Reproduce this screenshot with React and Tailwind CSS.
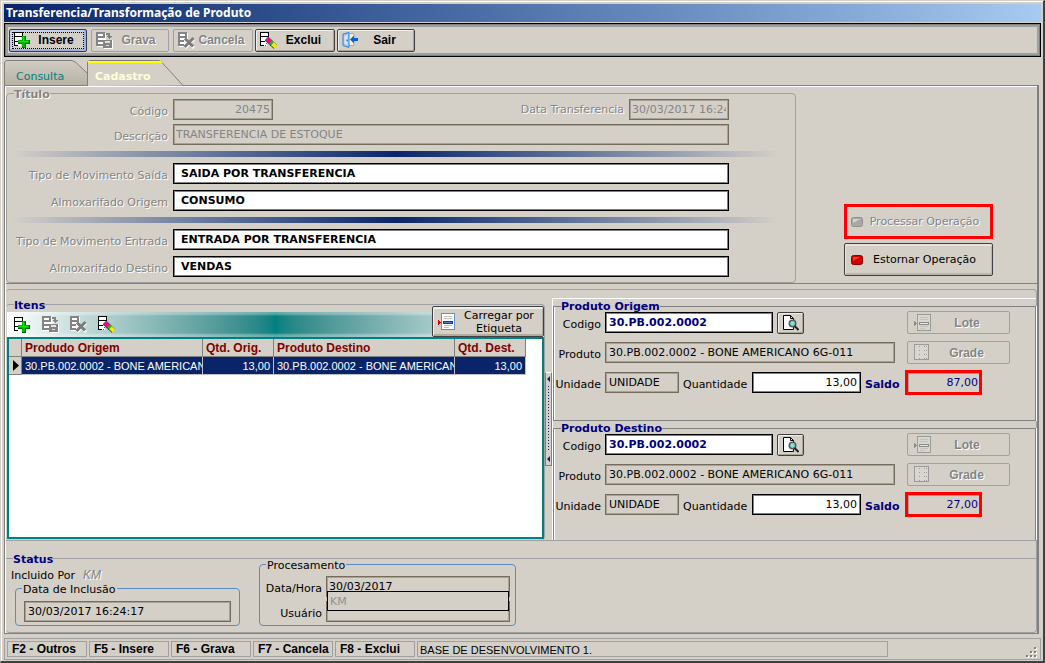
import React from "react";

const DISABLED_TEXT = "text-[#848484] [text-shadow:1px_1px_0_#fff]";

/* ---------- icons ---------- */

function GridRows() {
  return (
    <>
      <path d="M1 1h7v3H1z M1 5h7v4H1z M1 10h6v4H1z" fill="#fff" />
      <path d="M0 0h9v1H0z M0 4h9v1H0z M0 9h5v1H0z M0 0h1v14H0z M8 0h1v6H8z M1 13h3v1H1z" fill="#000" />
    </>
  );
}

function InsertIcon() {
  return (
    <svg width="16" height="16" viewBox="0 0 16 16" shapeRendering="crispEdges" aria-hidden="true">
      <GridRows />
      <path d="M8 4h4v4h4v4h-4v4H8v-4H4V8h4z" fill="#006400" />
      <path d="M8 4h3v4h4v3h-4v4H8v-4H4V8h4z" fill="#00b400" />
      <path d="M9 5h1v4h4v1H5V9h4z" fill="#00f000" />
    </svg>
  );
}

function SaveIcon() {
  return (
    <svg width="17" height="17" viewBox="0 0 17 17" shapeRendering="crispEdges" aria-hidden="true">
      <path d="M1 1h9v14H1z M8 8h9v9H8z" fill="#fff" />
      <path d="M0 0h9v2H0z M0 4h9v2H0z M0 8h7v2H0z M0 12h7v2H0z M0 0h2v14H0z M7 0h2v6H7z" fill="#848484" />
      <path d="M10 1h4v3h2l-3 3-3-3h2V3h-2z" fill="#848484" />
      <path d="M7 8h9v8H7z" fill="#848484" />
      <path d="M9 9h5v2H9z M10 13h3v1h-3z" fill="#e4e0da" />
    </svg>
  );
}

function CancelIcon() {
  return (
    <svg width="17" height="17" viewBox="0 0 17 17" aria-hidden="true">
      <g shapeRendering="crispEdges">
        <path d="M1 1h9v14H1z" fill="#fff" />
        <path d="M0 0h9v2H0z M0 4h9v2H0z M0 8h6v2H0z M0 12h6v2H0z M0 0h2v14H0z M7 0h2v6H7z" fill="#848484" />
      </g>
      <path d="M8 8l8 8M16 7l-9 9" stroke="#fff" strokeWidth="3" />
      <path d="M7 6.5l8 8M15.500 6l-9 9" stroke="#7c7c7c" strokeWidth="3" />
    </svg>
  );
}

function DeleteIcon() {
  return (
    <svg width="17" height="17" viewBox="0 0 17 17" aria-hidden="true">
      <g shapeRendering="crispEdges">
        <GridRows />
        <path d="M6 11h1v1H6z M5 13h1v1H5z M10 13h1v1h-1z" fill="#555" />
      </g>
      <path d="M6.500 6.500l9 8.500" stroke="#333" strokeWidth="5" />
      <path d="M7 6.500l3.500 3.500" stroke="#ff00a0" strokeWidth="4" />
      <path d="M9.800 9l1.500 1.500" stroke="#f02020" strokeWidth="4" />
      <path d="M10.800 10l2 2" stroke="#00c838" strokeWidth="4" />
      <path d="M12.500 11.700l3.500 3.300" stroke="#f4ec00" strokeWidth="4" />
    </svg>
  );
}

function ExitIcon() {
  return (
    <svg width="17" height="16" viewBox="0 0 17 16" aria-hidden="true">
      <path d="M3 1.500h9v12H3z" fill="#f8f0c8" stroke="#7db4f0" />
      <path d="M1 2l6-1.500v15L1 13.500z" fill="#9cc8f8" stroke="#3a7fd8" />
      <path d="M2.500 4l3-0.800v9.600l-3-0.800z" fill="#d8ecff" />
      <path d="M4.500 7.500h1.200v1.800H4.500z" fill="#1c50a8" />
      <path d="M8 7.500l4-4v2.500h4v3h-4v2.500z" fill="#0a5ce0" />
    </svg>
  );
}

function LabelIcon({ muted }) {
  const edge = muted ? "#9a9a9a" : "#5a94c8";
  const bar = muted ? "#8c8c8c" : "#0c3c8c";
  const page = muted ? "#d9d6cf" : "#fff";
  return (
    <svg width="17" height="17" viewBox="0 0 17 17" shapeRendering="crispEdges" aria-hidden="true">
      <path d="M3.500 0.500h13v16h-13z" fill={page} stroke={edge} />
      <path d="M6 3.500h8M6 5.500h8M6 12.500h8M6 14.500h5" stroke={muted ? "#c4c0ba" : "#c0c0c0"} />
      <path d="M5 8h10v3H5z" fill={bar} />
      <path d="M6 9h8v1H6z" fill={muted ? "#e8e5df" : "#4c88d8"} />
      <path d="M0 7l3 2.500L0 12z" fill={muted ? "#8c8c8c" : "#e00000"} />
    </svg>
  );
}

function GradeIcon() {
  return (
    <svg width="16" height="17" viewBox="0 0 16 17" shapeRendering="crispEdges" aria-hidden="true">
      <path d="M0.500 0.500h14v15h-14z" fill="#d9d6cf" stroke="#9a9a9a" />
      <path d="M5.500 2v13M10.500 2v13M12.500 2v13" stroke="#9c9c9c" strokeDasharray="1 3" />
    </svg>
  );
}

function SearchIcon() {
  return (
    <svg width="17" height="17" viewBox="0 0 17 17" aria-hidden="true">
      <path d="M1.500 1.500h7l3 3v11h-10z" fill="#fff" stroke="#000" />
      <path d="M8.500 1.500v3h3" fill="none" stroke="#000" />
      <circle cx="10.500" cy="9.500" r="3.200" fill="#7fe0e0" stroke="#5a5a5a" strokeWidth="1.600" />
      <path d="M12.500 12l4 4" stroke="#222" strokeWidth="2" />
    </svg>
  );
}

function Lamp({ muted }) {
  return (
    <svg width="12" height="10" viewBox="0 0 12 10" aria-hidden="true">
      <rect x="0.500" y="0.500" width="11" height="9" rx="2" fill={muted ? "#a8a8a8" : "#d40000"} stroke={muted ? "#909090" : "#8c0000"} />
      <path d="M2 6V2h7z" fill={muted ? "#d4d4d4" : "#f83830"} />
    </svg>
  );
}

/* ---------- controls ---------- */

function ToolButton({ icon, children, disabled, active, width }) {
  const look = disabled
    ? `border-[#a0a0a0] ${DISABLED_TEXT}`
    : active
      ? "border-[#303848] text-black shadow-[inset_-2px_-2px_0_#9db4e4,inset_1px_1px_0_#c4d0f0] outline-1 outline-dotted outline-black -outline-offset-4"
      : "border-[#404040] text-black shadow-[inset_1px_1px_0_#f0eeea,inset_-1px_-1px_0_#a8a498]";
  return (
    <button
      type="button"
      disabled={disabled}
      className={`flex h-[23px] items-center rounded-xs border pr-1 pl-1 font-['Liberation_Sans',sans-serif] text-xs font-bold ${width} ${look}`}
    >
      {icon}
      <span className="flex-1 text-center">{children}</span>
    </button>
  );
}

const FIELD_LOOKS = {
  locked: "border-[#746c5c] bg-[#d4d0c8] shadow-[inset_0_0_0_1px_#a8a294]",
  open: "border-black bg-white shadow-[inset_0_0_0_1px_#808080]",
};

function Field({ id, value, look = "locked", pad = "px-[3px]", className = "" }) {
  return (
    <input
      id={id}
      readOnly
      defaultValue={value}
      className={`h-[21px] min-w-0 border outline-none ${pad} ${FIELD_LOOKS[look]} ${className}`}
    />
  );
}

function FormRow({ id, label, value, look, pad, className, children }) {
  return (
    <div className="flex h-[21px] items-center gap-[5px]">
      <label htmlFor={id} className={`w-40 shrink-0 pt-1 text-right whitespace-nowrap ${DISABLED_TEXT}`}>
        {label}
      </label>
      <Field id={id} value={value} look={look} pad={pad} className={className} />
      {children}
    </div>
  );
}

function Divider() {
  return <div className="mr-4 ml-1 h-1.5 bg-linear-to-r from-[#d4d0c8] via-[#0a246a] to-[#d4d0c8]" />;
}

function Tab({ label, active }) {
  return (
    <button
      type="button"
      role="tab"
      aria-selected={active}
      className={`relative h-[26px] text-left ${active ? "w-24 pl-2 font-bold text-[#ffffd8]" : "w-[83px] pl-3 text-[#008080]"}`}
    >
      {active ? (
        <svg className="absolute inset-0" width="97" height="26" viewBox="0 0 97 26" aria-hidden="true">
          <path d="M0.500 26V2l2-1.500H72l3 2L96 25.500" fill="#d4d0c8" stroke="#808080" />
          <path d="M1 1h72l2 2H1z" fill="#ffff00" shapeRendering="crispEdges" />
        </svg>
      ) : (
        <svg className="absolute inset-0" width="84" height="26" viewBox="0 0 84 26" aria-hidden="true">
          <defs>
            <linearGradient id="tabShade" x1="0" y1="0" x2="0" y2="1">
              <stop offset="0" stopColor="#d0ccc2" />
              <stop offset="1" stopColor="#b8b2a4" />
            </linearGradient>
          </defs>
          <path d="M0.500 26V2l2-1.500H68l4 2L83.500 13.500V25.500H0" fill="url(#tabShade)" stroke="#808080" />
        </svg>
      )}
      <span className="relative inline-block pt-2">{label}</span>
    </button>
  );
}

function SideButton({ icon, children }) {
  return (
    <button
      type="button"
      disabled
      className={`flex h-[23px] w-[103px] shrink-0 items-center rounded-xs border border-[#a0a0a0] px-1.5 font-['Liberation_Sans',sans-serif] text-xs font-bold ${DISABLED_TEXT}`}
    >
      {icon}
      <span className="flex-1 text-center">{children}</span>
    </button>
  );
}

function ProductBox({ title, prefix, balance, className }) {
  const label = "w-[47px] shrink-0 pt-1 text-right whitespace-nowrap";
  return (
    <fieldset className={`min-w-0 border border-[#808080] shadow-[inset_1px_0_0_#fff,1px_0_0_#fff] ${className}`}>
      <legend className="ml-[7px] h-3 leading-[14px] font-bold text-[#000080]">{title}</legend>
      <div className="flex flex-col gap-[9px] pr-[25px]">
        <div className="flex h-[21px] items-center gap-1">
          <label htmlFor={`${prefix}-code`} className={label}>Codigo</label>
          <Field id={`${prefix}-code`} value="30.PB.002.0002" look="open" className="w-[168px] font-bold text-[#000080]" />
          <button
            type="button"
            aria-label="Pesquisar"
            className="mr-auto flex h-[22px] w-[27px] items-center justify-center rounded-xs border border-[#404040] shadow-[inset_1px_1px_0_#f0eeea,inset_-1px_-1px_0_#a8a498]"
          >
            <SearchIcon />
          </button>
          <SideButton icon={<LabelIcon muted />}>Lote</SideButton>
        </div>
        <div className="flex h-[21px] items-center gap-1">
          <label htmlFor={`${prefix}-product`} className={label}>Produto</label>
          <Field id={`${prefix}-product`} value="30.PB.002.0002 - BONE AMERICANO 6G-011" className="mr-2 flex-1" />
          <SideButton icon={<GradeIcon />}>Grade</SideButton>
        </div>
        <div className="flex h-[21px] items-center gap-1">
          <label htmlFor={`${prefix}-unit`} className={label}>Unidade</label>
          <Field id={`${prefix}-unit`} value="UNIDADE" className="w-[74px]" />
          <label htmlFor={`${prefix}-qty`} className="w-[65px] shrink-0 pt-1 whitespace-nowrap">Quantidade</label>
          <Field id={`${prefix}-qty`} value="13,00" look="open" className="w-[109px] text-right" />
          <label htmlFor={`${prefix}-balance`} className="w-9 shrink-0 pt-1 font-bold whitespace-nowrap text-[#000080]">Saldo</label>
          <input
            id={`${prefix}-balance`}
            readOnly
            defaultValue={balance}
            className="h-[25px] w-[77px] border-[3px] border-[#ff0000] bg-[#d4d0c8] px-px text-right text-[#000080] shadow-[inset_1px_1px_0_#a0a0a0] outline-none"
          />
        </div>
      </div>
    </fieldset>
  );
}

function ItemsTable() {
  const head = "h-[18px] overflow-hidden border-r border-b border-[#808080] bg-[#d4d0c8] px-[3px] text-left text-xs leading-4 font-bold whitespace-nowrap text-[#800000]";
  const cell = "h-[18px] border-r border-b border-[#c0c0c0] bg-[#0a246a] pl-[3px] text-[11px] leading-4 whitespace-nowrap text-white";
  return (
    <table className="w-[517px] table-fixed border-separate border-spacing-0 font-['Liberation_Sans',sans-serif]">
      <colgroup>
        <col className="w-[13px]" />
        <col className="w-[181px]" />
        <col className="w-[71px]" />
        <col className="w-[181px]" />
        <col className="w-[71px]" />
      </colgroup>
      <thead>
        <tr>
          <th className={head} />
          <th className={head}>Produdo Origem</th>
          <th className={head}>Qtd. Orig.</th>
          <th className={head}>Produto Destino</th>
          <th className={head}>Qtd. Dest.</th>
        </tr>
      </thead>
      <tbody>
        <tr>
          <td className="border-r border-b border-[#808080] bg-[#d4d0c8] pl-1">
            <svg width="6" height="11" viewBox="0 0 6 11" aria-hidden="true">
              <path d="M0 0l6 5.500L0 11z" />
            </svg>
          </td>
          <td className={cell}>
            <div className="overflow-hidden">30.PB.002.0002 - BONE AMERICANO</div>
          </td>
          <td className={`${cell} pr-[3px] text-right`}>13,00</td>
          <td className={cell}>
            <div className="overflow-hidden">30.PB.002.0002 - BONE AMERICANO</div>
          </td>
          <td className={`${cell} pr-[3px] text-right`}>13,00</td>
        </tr>
      </tbody>
    </table>
  );
}

function IconButton({ label, disabled, children }) {
  return (
    <button type="button" aria-label={label} disabled={disabled} className="flex w-7 items-center">
      {children}
    </button>
  );
}

const KEYS = ["F2 - Outros", "F5 - Insere", "F6 - Grava", "F7 - Cancela", "F8 - Exclui"];

export default function App() {
  return (
    <div className="flex min-h-screen flex-col border-t border-r-2 border-b-2 border-l border-t-[#d4d0c8] border-r-[#404040] border-b-[#404040] border-l-[#d4d0c8] bg-[#d4d0c8] pt-[3px] pr-0.5 pb-px pl-[3px] font-['DejaVu_Sans',sans-serif] text-[11px] leading-[14px] text-black shadow-[inset_1px_1px_0_#fff]">
      <header className="h-[19px] bg-linear-to-r from-[#0a246a] to-[#a6caf0] bg-clip-content pb-px">
        <h1 className="px-0.5 font-['Noto_Sans',sans-serif] text-xs leading-[18px] font-bold text-white">Transferencia/Transformação de Produto</h1>
      </header>

      <div className="flex h-[34px] shrink-0 items-center gap-1 border border-black px-1 shadow-[inset_0_0_0_1px_#808080,inset_0_0_0_3px_#a0a0a0]">
        <ToolButton icon={<InsertIcon />} active width="w-[78px]">Insere</ToolButton>
        <ToolButton icon={<SaveIcon />} disabled width="w-[78px]">Grava</ToolButton>
        <div className="flex gap-0.5">
          <ToolButton icon={<CancelIcon />} disabled width="w-[80px]">Cancela</ToolButton>
          <ToolButton icon={<DeleteIcon />} width="w-[80px]">Exclui</ToolButton>
          <ToolButton icon={<ExitIcon />} width="w-[78px]">Sair</ToolButton>
        </div>
      </div>

      <div role="tablist" className="mt-[3px] -mb-px flex h-[26px] shrink-0">
        <Tab label="Consulta" />
        <Tab label="Cadastro" active />
      </div>

      <main className="mr-0.5 flex flex-1 flex-col border border-r-2 border-[#808080] pl-px shadow-[inset_1px_1px_0_#fff]">
        <section className="flex border-b border-[#808080]">
          <fieldset className="mt-px min-w-0 flex-1 rounded-sm border border-[#a0a0a0]">
            <legend className={`ml-[7px] h-3 leading-[15px] font-bold ${DISABLED_TEXT}`}>Título</legend>
            <div className="flex flex-col gap-1.5 pb-[5px] pl-px">
              <div className="flex flex-col gap-1 pr-[66px]">
                <FormRow id="codigo" label="Código" value="20475" pad="px-0.5" className="w-[100px] text-right text-[#848484]">
                  <label htmlFor="data" className={`ml-auto whitespace-nowrap ${DISABLED_TEXT}`}>Data Transferencia</label>
                  <Field id="data" value="30/03/2017 16:24:17" pad="px-0.5" className="w-[100px] text-[#848484]" />
                </FormRow>
                <FormRow id="descricao" label="Descrição" value="TRANSFERENCIA DE ESTOQUE" pad="px-0.5" className="flex-1 text-[#848484]" />
              </div>
              <Divider />
              <div className="flex flex-col gap-1.5 pr-[66px]">
                <FormRow id="mov-saida" label="Tipo de Movimento Saída" value="SAIDA POR TRANSFERENCIA" look="open" pad="px-[7px]" className="flex-1 font-bold" />
                <FormRow id="origem" label="Almoxarifado Origem" value="CONSUMO" look="open" pad="px-[7px]" className="flex-1 font-bold" />
              </div>
              <Divider />
              <div className="flex flex-col gap-1.5 pr-[66px]">
                <FormRow id="mov-entrada" label="Tipo de Movimento Entrada" value="ENTRADA POR TRANSFERENCIA" look="open" pad="px-[7px]" className="flex-1 font-bold" />
                <FormRow id="destino" label="Almoxarifado Destino" value="VENDAS" look="open" pad="px-[7px]" className="flex-1 font-bold" />
              </div>
            </div>
          </fieldset>
          <div className="flex w-[241px] shrink-0 flex-col justify-end gap-1 pr-11 pb-[7px] pl-12">
            <button
              type="button"
              disabled
              className={`flex h-[35px] items-center border-[3px] border-[#ff0000] px-1 whitespace-nowrap ${DISABLED_TEXT}`}
            >
              <Lamp muted />
              <span className="flex-1 text-center">Processar Operação</span>
            </button>
            <button
              type="button"
              className="flex h-[33px] items-center rounded-xs border border-[#404040] px-1.5 whitespace-nowrap shadow-[inset_1px_2px_0_#e6e3dd,inset_-1px_-2px_0_#bab6aa]"
            >
              <Lamp />
              <span className="flex-1 text-center">Estornar Operação</span>
            </button>
          </div>
        </section>

        <section className="mt-[5px] flex flex-1 flex-col rounded-sm border border-l-0 border-[#a0a0a0]">
          <div className="mt-2 flex flex-1 border-b border-[#a0a0a0]">
            <fieldset className="flex min-w-0 flex-1 flex-col rounded-sm border-t border-r border-[#a0a0a0] pb-px pl-px">
              <legend className="ml-[7px] h-3 leading-[15px] font-bold text-[#000080]">Itens</legend>
              <div className="mt-0.5 flex h-[25px] shrink-0 items-end bg-linear-to-r from-white via-[#008080] to-white pl-[7px] shadow-[inset_0_3px_2px_rgba(255,255,255,0.35),inset_0_-3px_2px_rgba(255,255,255,0.35)]">
                <div className="flex flex-1 self-center">
                  <IconButton label="Inserir item"><InsertIcon /></IconButton>
                  <IconButton label="Gravar item" disabled><SaveIcon /></IconButton>
                  <IconButton label="Cancelar item" disabled><CancelIcon /></IconButton>
                  <IconButton label="Excluir item"><DeleteIcon /></IconButton>
                </div>
                <button
                  type="button"
                  className="relative flex h-[31px] w-[112px] items-center rounded-xs border border-[#404040] bg-[#d4d0c8] pl-[5px] leading-[13px] shadow-[inset_1px_2px_0_#f0eeea,inset_-1px_-2px_0_#b0ac9f]"
                >
                  <LabelIcon />
                  <span className="flex-1 text-center">Carregar por Etiqueta</span>
                </button>
              </div>
              <div className="flex-1 border-2 border-[#008080] bg-white">
                <ItemsTable />
              </div>
            </fieldset>

            <div className="flex w-[7px] shrink-0 flex-col items-center justify-between self-center border border-[#808080] border-t-white py-px">
              <svg width="5" height="90" viewBox="0 0 5 90" aria-hidden="true">
                <path d="M4 2v6L1 5z M4 82v6L1 85z" fill="#0a246a" />
                <path d="M2.500 12v66" stroke="#0a246a" strokeDasharray="1 2" />
              </svg>
            </div>

            <div className="flex w-[484px] shrink-0 flex-col border-t border-l border-white pt-px">
              <ProductBox title="Produto Origem" prefix="origem" balance="87,00" className="h-[121px]" />
              <ProductBox title="Produto Destino" prefix="destino" balance="27,00" className="mt-px flex-1 border-b-0" />
            </div>
          </div>

          <fieldset className="mt-[11px] min-w-0 border-t border-[#a0a0a0]">
            <legend className="ml-[7px] h-3 leading-[15px] font-bold text-[#000080]">Status</legend>
            <div className="flex gap-[19px] pb-1.5 pl-[5px]">
              <div className="flex w-[229px] flex-col pt-1">
                <p className="flex gap-2 leading-[15px]">
                  Incluido Por
                  <em className="font-['Liberation_Sans',sans-serif] text-xs leading-[15px] text-[#848484] [text-shadow:1px_1px_0_#fff]">KM</em>
                </p>
                <fieldset className="-mt-px ml-1 min-w-0 rounded-sm border border-[#5a8cc8]">
                  <legend className="ml-1.5 h-3 px-px leading-[15px]">
                    <label htmlFor="inclusao">Data de Inclusão</label>
                  </legend>
                  <div className="flex px-2 pt-[7px] pb-[3px]">
                    <Field id="inclusao" value="30/03/2017 16:24:17" className="flex-1" />
                  </div>
                </fieldset>
              </div>
              <fieldset className="-mt-1.5 w-[257px] min-w-0 rounded-sm border border-[#5a8cc8]">
                <legend className="ml-1.5 h-3 px-px leading-[15px]">Procesamento</legend>
                <div className="relative flex flex-col gap-1 pt-1.5 pr-[5px]">
                  <div className="flex h-[21px] items-center gap-1">
                    <label htmlFor="proc-data" className="w-[62px] shrink-0 pt-1 text-right">Data/Hora</label>
                    <Field id="proc-data" value="30/03/2017" pad="px-0.5" className="flex-1" />
                  </div>
                  <div className="flex h-[21px] items-center gap-1">
                    <label htmlFor="proc-user" className="w-[62px] shrink-0 pt-1 text-right">Usuário</label>
                    <Field id="proc-user" value="" className="flex-1" />
                  </div>
                  <input
                    aria-label="Usuário do processamento"
                    readOnly
                    defaultValue="KM"
                    className="absolute top-[21px] right-1.5 left-[67px] h-5 border border-black bg-[#d4d0c8] px-0.5 text-[#909090] outline-none"
                  />
                </div>
              </fieldset>
            </div>
          </fieldset>
        </section>
      </main>

      <footer className="mt-1 flex h-[22px] shrink-0 items-center gap-0.5 border border-[#a0a0a0] px-0.5 font-['Liberation_Sans',sans-serif] text-xs">
        {KEYS.map((key) => (
          <div key={key} className="h-4 w-20 border border-[#a0a0a0] pl-1 leading-[15px] font-bold whitespace-nowrap">
            {key}
          </div>
        ))}
        <div className="h-4 flex-1 border border-[#a0a0a0] pl-0.5 text-[11px] leading-4">BASE DE DESENVOLVIMENTO 1.</div>
        <div className="flex w-[148px] justify-end self-end">
          <svg width="12" height="12" viewBox="0 0 12 12" shapeRendering="crispEdges" aria-hidden="true">
            <path d="M9 1h2v2H9z M5 5h2v2H5z M9 5h2v2H9z M1 9h2v2H1z M5 9h2v2H5z M9 9h2v2H9z" fill="#fff" />
            <path d="M8 0h2v2H8z M4 4h2v2H4z M8 4h2v2H8z M0 8h2v2H0z M4 8h2v2H4z M8 8h2v2H8z" fill="#808080" />
          </svg>
        </div>
      </footer>
    </div>
  );
}
